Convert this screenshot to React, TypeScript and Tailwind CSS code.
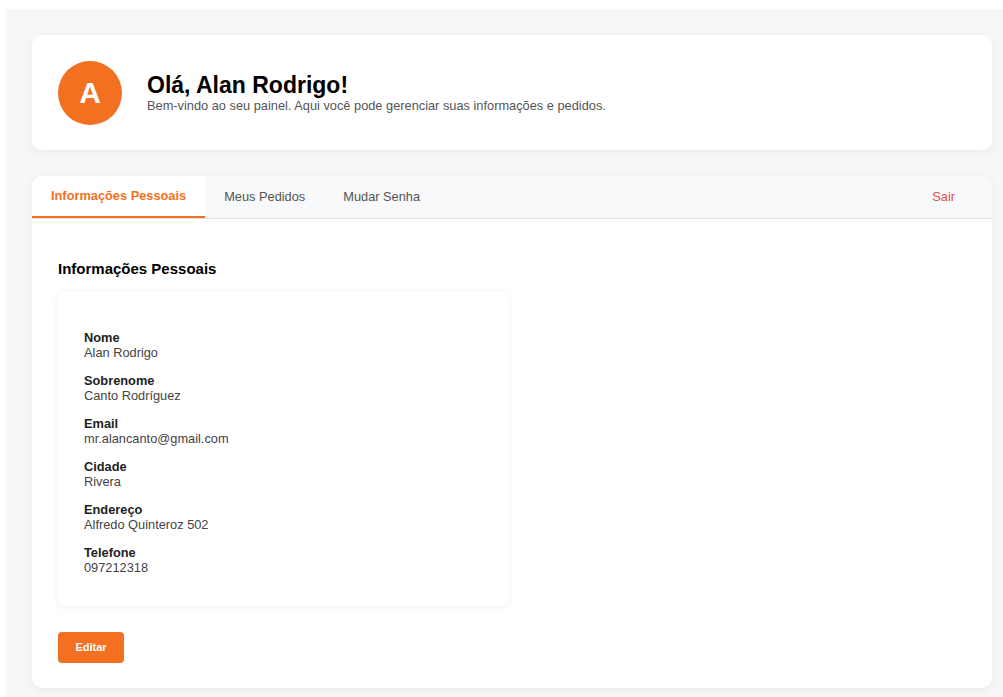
const fields = [
  { label: "Nome", value: "Alan Rodrigo" },
  { label: "Sobrenome", value: "Canto Rodríguez" },
  { label: "Email", value: "mr.alancanto@gmail.com" },
  { label: "Cidade", value: "Rivera" },
  { label: "Endereço", value: "Alfredo Quinteroz 502" },
  { label: "Telefone", value: "097212318" },
];

const tabs = ["Informações Pessoais", "Meus Pedidos", "Mudar Senha"];

export default function App() {
  return (
    <div className="min-h-screen bg-white pl-[6px] pt-[9px] font-['Liberation_Sans',Arial,sans-serif]">
      <div className="min-h-[688px] bg-[#f7f7f7] pl-[26px] pr-[11px] pt-[26px] pb-[9px]">
        {/* header */}
        <div className="flex h-[115px] items-center gap-[25px] rounded-[10px] bg-white px-[26px] shadow-[0_2px_10px_rgba(0,0,0,0.06)]">
          <div className="flex h-16 w-16 items-center justify-center rounded-full bg-[#f37021] text-[30px] font-bold text-white">
            A
          </div>
          <div className="flex flex-col">
            <h1 className="text-[23px] leading-[26px] font-bold text-black">Olá, Alan Rodrigo!</h1>
            <p className="text-[12.8px] leading-[16px] text-[#555]">
              Bem-vindo ao seu painel. Aqui você pode gerenciar suas informações e pedidos.
            </p>
          </div>
        </div>

        {/* tabs */}
        <div className="mt-[26px] overflow-hidden rounded-[10px] bg-white shadow-[0_2px_10px_rgba(0,0,0,0.06)]">
          <div className="flex h-[43px] border-b border-[#dee2e6] bg-[#f8f9fa]">
            {tabs.map((t, i) => (
              <button
                key={t}
                className={
                  i === 0
                    ? "border-b-2 border-[#f37021] bg-white px-[19px] text-[12.8px] font-bold text-[#f37021]"
                    : "px-[19px] text-[12.8px] text-[#555]"
                }
              >
                {t}
              </button>
            ))}
            <button className="ml-auto mr-[18px] px-[19px] text-[12.8px] text-[#e4514f]">Sair</button>
          </div>

          <div className="px-[26px] pt-[41px] pb-[25px]">
            <h2 className="text-[15px] leading-[18px] font-bold text-black">Informações Pessoais</h2>
            <div className="mt-[14px] w-[451px] rounded-[6px] bg-white px-[26px] pt-[38px] pb-[31px] shadow-[0_1px_6px_rgba(0,0,0,0.07)]">
              <div className="flex flex-col gap-[13px]">
                {fields.map((f) => (
                  <div key={f.label} className="flex flex-col">
                    <span className="text-[12.8px] leading-[15px] font-bold text-[#222]">{f.label}</span>
                    <span className="text-[12.8px] leading-[15px] text-[#444]">{f.value}</span>
                  </div>
                ))}
              </div>
            </div>
            <button className="mt-[26px] h-[31px] w-[66px] rounded-[4px] bg-[#f37021] text-[11px] font-bold text-white">
              Editar
            </button>
          </div>
        </div>
      </div>
    </div>
  );
}
